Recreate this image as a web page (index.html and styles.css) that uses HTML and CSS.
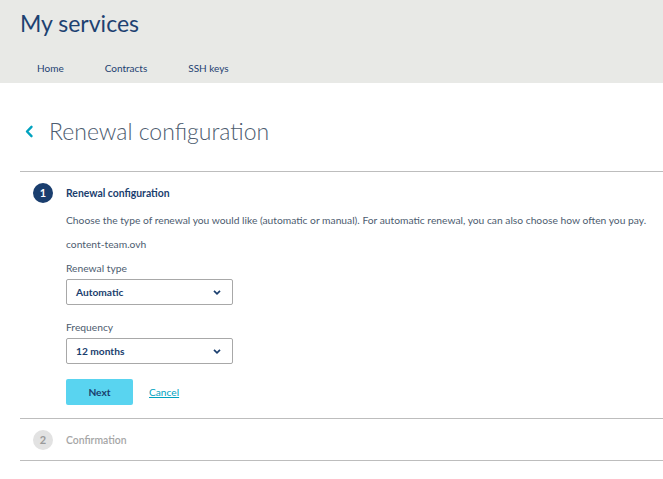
FILE: index.html
```html
<!DOCTYPE html>
<html lang="en">
<head>
<meta charset="utf-8">
<title>Renewal configuration</title>
<link rel="stylesheet" href="styles.css">
</head>
<body>
<header class="top">
  <h1 class="top-title">My services</h1>
  <nav class="top-nav">
    <a class="nav-link">Home</a>
    <a class="nav-link">Contracts</a>
    <a class="nav-link">SSH keys</a>
  </nav>
</header>
<main class="page">
  <div class="page-head">
    <svg class="back" width="10" height="13" viewBox="0 0 10 13"><path d="M7.5 1.8 L3 6.5 L7.5 11.2" fill="none" stroke="#00a2bf" stroke-width="2.4" stroke-linecap="round" stroke-linejoin="round"/></svg>
    <h2 class="page-title">Renewal configuration</h2>
  </div>
  <section class="step active">
    <div class="step-head">
      <span class="step-num">1</span>
      <span class="step-title">Renewal configuration</span>
    </div>
    <div class="step-body">
      <p class="desc">Choose the type of renewal you would like (automatic or manual). For automatic renewal, you can also choose how often you pay.</p>
      <p class="desc">content-team.ovh</p>
      <label class="field-label">Renewal type</label>
      <div class="select"><span>Automatic</span><svg width="8" height="5" viewBox="0 0 8 5"><path d="M1 0.8 L4 3.8 L7 0.8" fill="none" stroke="#1a3e6e" stroke-width="1.7"/></svg></div>
      <label class="field-label">Frequency</label>
      <div class="select"><span>12 months</span><svg width="8" height="5" viewBox="0 0 8 5"><path d="M1 0.8 L4 3.8 L7 0.8" fill="none" stroke="#1a3e6e" stroke-width="1.7"/></svg></div>
      <div class="actions">
        <button class="btn">Next</button>
        <a class="cancel">Cancel</a>
      </div>
    </div>
  </section>
  <section class="step">
    <div class="step-head">
      <span class="step-num off">2</span>
      <span class="step-title off">Confirmation</span>
    </div>
  </section>
</main>
</body>
</html>
```
FILE: styles.css
```css
* { box-sizing: border-box; }
body {
  margin: 0;
  font-family: "Lato", "Open Sans", sans-serif;
  color: #4d5c6f;
  background: #fff;
}
.top {
  background: #e8e9e6;
  height: 83px;
  padding: 9px 20px 0 20px;
}
.top-title {
  margin: 0;
  font-weight: 400;
  font-size: 23px;
  line-height: 28px;
  color: #1d4171;
}
.top-nav {
  display: flex;
  margin-top: 25px;
  padding-left: 17px;
  gap: 41px;
}
.nav-link {
  font-size: 10px;
  color: #1d4171;
}
.page {
  padding-left: 20px;
}
.page-head {
  display: flex;
  align-items: center;
  height: 88px;
  padding-left: 4px;
  padding-top: 7px;
  gap: 15px;
}
.back {
  width: 10px;
  height: 13px;
  margin-top: 2px;
}
.page-title {
  margin: 0;
  font-weight: 300;
  font-size: 23px;
  color: #4d5c6f;
}
.step {
  border-top: 1px solid #bdbdbd;
}
.step:last-child {
  border-bottom: 1px solid #bdbdbd;
}
.step-head {
  display: flex;
  align-items: center;
  height: 41px;
  padding-left: 13px;
  gap: 13px;
}
.step-num {
  width: 20px;
  height: 20px;
  border-radius: 50%;
  background: #1a3e6e;
  color: #fff;
  font-weight: 700;
  font-size: 11px;
  display: flex;
  align-items: center;
  justify-content: center;
}
.step-num.off {
  background: #e2e2e2;
  color: #9a9a9a;
}
.step-title {
  font-weight: 700;
  font-size: 10.4px;
  color: #1a3e6e;
}
.step-title.off { color: #a6a6a6; font-weight: 600; }
.step-body {
  padding-left: 46px;
  padding-bottom: 13px;
}
.desc {
  margin: 0 0 10px 0;
  font-size: 10.27px;
  line-height: 14px;
}
.field-label {
  display: block;
  font-size: 10.27px;
  line-height: 14px;
  margin-bottom: 4px;
}
.select {
  width: 167px;
  height: 26px;
  border: 1px solid #a8a8a8;
  border-radius: 2px;
  display: flex;
  align-items: center;
  justify-content: space-between;
  padding: 0 11px 0 9px;
  font-size: 10.2px;
  font-weight: 700;
  color: #1a3e6e;
  margin-bottom: 15px;
}
.actions {
  display: flex;
  align-items: center;
  gap: 16px;
}
.btn {
  width: 67px;
  height: 26px;
  border: none;
  border-radius: 2px;
  background: #59d4f0;
  color: #1a3e6e;
  font-family: inherit;
  font-weight: 700;
  font-size: 10.2px;
}
.cancel {
  font-size: 10.2px;
  color: #00a2bf;
  text-decoration: underline;
}
```
